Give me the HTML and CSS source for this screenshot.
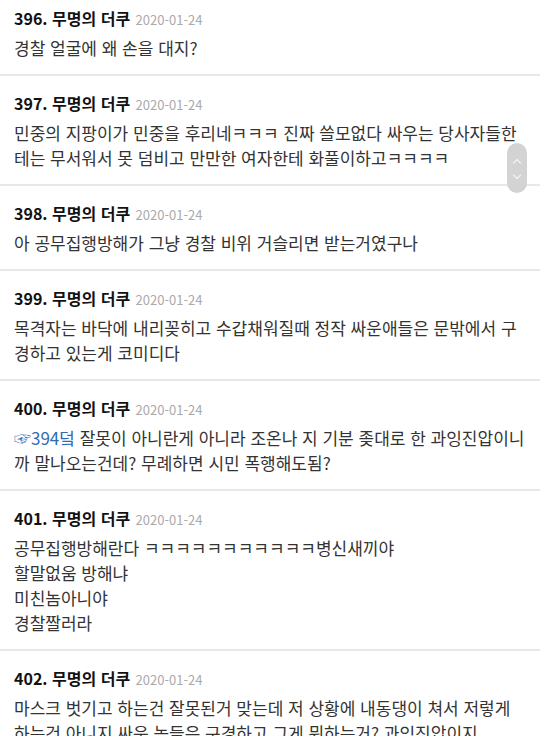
FILE: index.html
```html
<!DOCTYPE html>
<html lang="ko">
<head>
    <meta charset="UTF-8">
    <meta name="viewport" content="width=device-width, initial-scale=1.0">
    <title>댓글</title>
    <link rel="stylesheet" href="styles.css">
</head>
<body>
    <div class="comments">
        <div class="comment">
            <div class="comment-head"><b>396. 무명의 더쿠</b> <span class="date">2020-01-24</span></div>
            <div class="comment-body">경찰 얼굴에 왜 손을 대지?</div>
        </div>
        <div class="comment">
            <div class="comment-head"><b>397. 무명의 더쿠</b> <span class="date">2020-01-24</span></div>
            <div class="comment-body">민중의 지팡이가 민중을 후리네ㅋㅋㅋ 진짜 쓸모없다 싸우는 당사자들한테는 무서워서 못 덤비고 만만한 여자한테 화풀이하고ㅋㅋㅋㅋ</div>
        </div>
        <div class="comment">
            <div class="comment-head"><b>398. 무명의 더쿠</b> <span class="date">2020-01-24</span></div>
            <div class="comment-body">아 공무집행방해가 그냥 경찰 비위 거슬리면 받는거였구나</div>
        </div>
        <div class="comment">
            <div class="comment-head"><b>399. 무명의 더쿠</b> <span class="date">2020-01-24</span></div>
            <div class="comment-body">목격자는 바닥에 내리꽂히고 수갑채워질때 정작 싸운애들은 문밖에서 구경하고 있는게 코미디다</div>
        </div>
        <div class="comment">
            <div class="comment-head"><b>400. 무명의 더쿠</b> <span class="date">2020-01-24</span></div>
            <div class="comment-body"><a class="reply" href="#">☞394덬</a> 잘못이 아니란게 아니라 조온나 지 기분 좆대로 한 과잉진압이니까 말나오는건데? 무례하면 시민 폭행해도됨?</div>
        </div>
        <div class="comment">
            <div class="comment-head"><b>401. 무명의 더쿠</b> <span class="date">2020-01-24</span></div>
            <div class="comment-body">공무집행방해란다 ㅋㅋㅋㅋㅋㅋㅋㅋㅋㅋㅋ병신새끼야<br>할말없움 방해냐<br>미친놈아니야<br>경찰짤러라</div>
        </div>
        <div class="comment">
            <div class="comment-head"><b>402. 무명의 더쿠</b> <span class="date">2020-01-24</span></div>
            <div class="comment-body">마스크 벗기고 하는건 잘못된거 맞는데 저 상황에 내동댕이 쳐서 저렇게 하는건 아니지 싸운 놈들은 구경하고 그게 뭐하는거? 과잉진압이지</div>
        </div>
    </div>

    <div class="scroll-btns">
        <svg width="20" height="50" viewBox="0 0 20 50">
            <polyline points="6.5,20 10,16.5 13.5,20" fill="none" stroke="#f2f2f2" stroke-width="1.4" stroke-linecap="round" stroke-linejoin="round"/>
            <polyline points="6.5,32 10,35.5 13.5,32" fill="none" stroke="#f2f2f2" stroke-width="1.4" stroke-linecap="round" stroke-linejoin="round"/>
        </svg>
    </div>
</body>
</html>
```

FILE: styles.css
```css
body {
    font-family: "Noto Sans CJK KR", "Noto Sans", sans-serif;
    background-color: #fff;
    color: #333;
    margin: 0;
    padding: 0;
    overflow: hidden;
}
.comments {
    margin-top: -9px;
}
.comment {
    padding: 13px 14px 14px 14px;
    border-bottom: 2px solid #e8e8e8;
}
.comment-head {
    font-size: 16px;
    line-height: 28px;
    height: 28px;
    color: #111;
}
.comment-head b {
    font-weight: bold;
}
.date {
    font-size: 13px;
    line-height: 1;
    color: #aaa;
    margin-left: 1px;
}
.comment-body {
    font-size: 17px;
    line-height: 25px;
    margin-top: 3px;
}
.reply {
    color: #2f6db3;
    text-decoration: none;
}
.scroll-btns {
    position: fixed;
    top: 143px;
    left: 507px;
    width: 20px;
    height: 50px;
    border-radius: 10px;
    background-color: #d3d3d3;
}
.scroll-btns svg {
    display: block;
}
```
